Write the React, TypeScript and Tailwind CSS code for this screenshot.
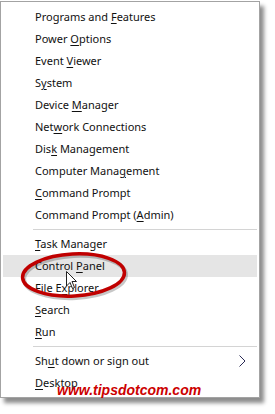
import React from 'react';

type Item = { pre: string; key: string; post: string; active?: boolean; arrow?: boolean };

const GROUPS: Item[][] = [
  [
    { pre: 'Programs and ', key: 'F', post: 'eatures' },
    { pre: 'Power ', key: 'O', post: 'ptions' },
    { pre: 'Event ', key: 'V', post: 'iewer' },
    { pre: 'S', key: 'y', post: 'stem' },
    { pre: 'Device ', key: 'M', post: 'anager' },
    { pre: 'Net', key: 'w', post: 'ork Connections' },
    { pre: 'Dis', key: 'k', post: ' Management' },
    { pre: 'Computer Mana', key: 'g', post: 'ement' },
    { pre: '', key: 'C', post: 'ommand Prompt' },
    { pre: 'Command Prompt (', key: 'A', post: 'dmin)' },
  ],
  [
    { pre: '', key: 'T', post: 'ask Manager' },
    { pre: 'Control ', key: 'P', post: 'anel', active: true },
    { pre: 'File E', key: 'x', post: 'plorer' },
    { pre: '', key: 'S', post: 'earch' },
    { pre: '', key: 'R', post: 'un' },
  ],
  [
    { pre: 'Sh', key: 'u', post: 't down or sign out', arrow: true },
    { pre: '', key: 'D', post: 'esktop' },
  ],
];

function Row({ item }: { item: Item }) {
  return (
    <div
      className={`h-[22px] flex items-center justify-between pl-[32px] pr-[10px] ${item.active ? 'bg-[#e5e5e5]' : ''}`}
    >
      <span>
        {item.pre}
        <span className="underline underline-offset-2">{item.key}</span>
        {item.post}
      </span>
      {item.arrow && (
        <svg width="7" height="12" viewBox="0 0 7 12" className="mr-[1px]">
          <polyline points="0.5,0.5 6,6 0.5,11.5" fill="none" stroke="#2b2b55" strokeWidth="1" />
        </svg>
      )}
    </div>
  );
}

export default function App() {
  return (
    <div className="relative w-[275px] h-[414px] bg-white overflow-hidden font-['Noto_Sans',sans-serif] text-[11px] text-[#111]">
      {/* Menu */}
      <div className="mt-[1px] w-[260px] border border-[#a3a3a3] bg-white px-[2px] pt-[4px] pb-[3px] shadow-[4px_5px_4px_rgba(0,0,0,0.45)]">
        {GROUPS.map((group, gi) => (
          <div key={gi}>
            {gi > 0 && (
              <div className="py-[3px] pl-[30px]">
                <div className="h-px bg-[#d4d4d4]" />
              </div>
            )}
            {group.map((item, i) => (
              <Row key={i} item={item} />
            ))}
          </div>
        ))}
      </div>

      {/* Red annotation ellipse */}
      <svg className="absolute left-[18px] top-[250px]" width="112" height="52" viewBox="0 0 112 52">
        <ellipse cx="57" cy="27" rx="51" ry="21" fill="none" stroke="rgba(0,0,0,0.22)" strokeWidth="4" transform="rotate(-3 57 27)" />
        <ellipse cx="55.5" cy="25" rx="51" ry="21" fill="none" stroke="#c00000" strokeWidth="3.5" transform="rotate(-3 55.5 25)" />
      </svg>

      {/* Cursor */}
      <svg className="absolute left-[66px] top-[271px]" width="12" height="19" viewBox="0 0 12 19">
        <path d="M0.5 0.5 L0.5 15 L4 11.5 L6.5 17.5 L8.5 16.5 L6 10.5 L10.5 10.5 Z" fill="white" stroke="#222" strokeWidth="1" />
      </svg>

      {/* Watermark */}
      <div className="absolute left-[57px] top-[382px] text-[14px] leading-[16px] font-bold italic text-[#cc0000] font-['Liberation_Sans',Arial,sans-serif]">
        www.tipsdotcom.com
      </div>
    </div>
  );
}
